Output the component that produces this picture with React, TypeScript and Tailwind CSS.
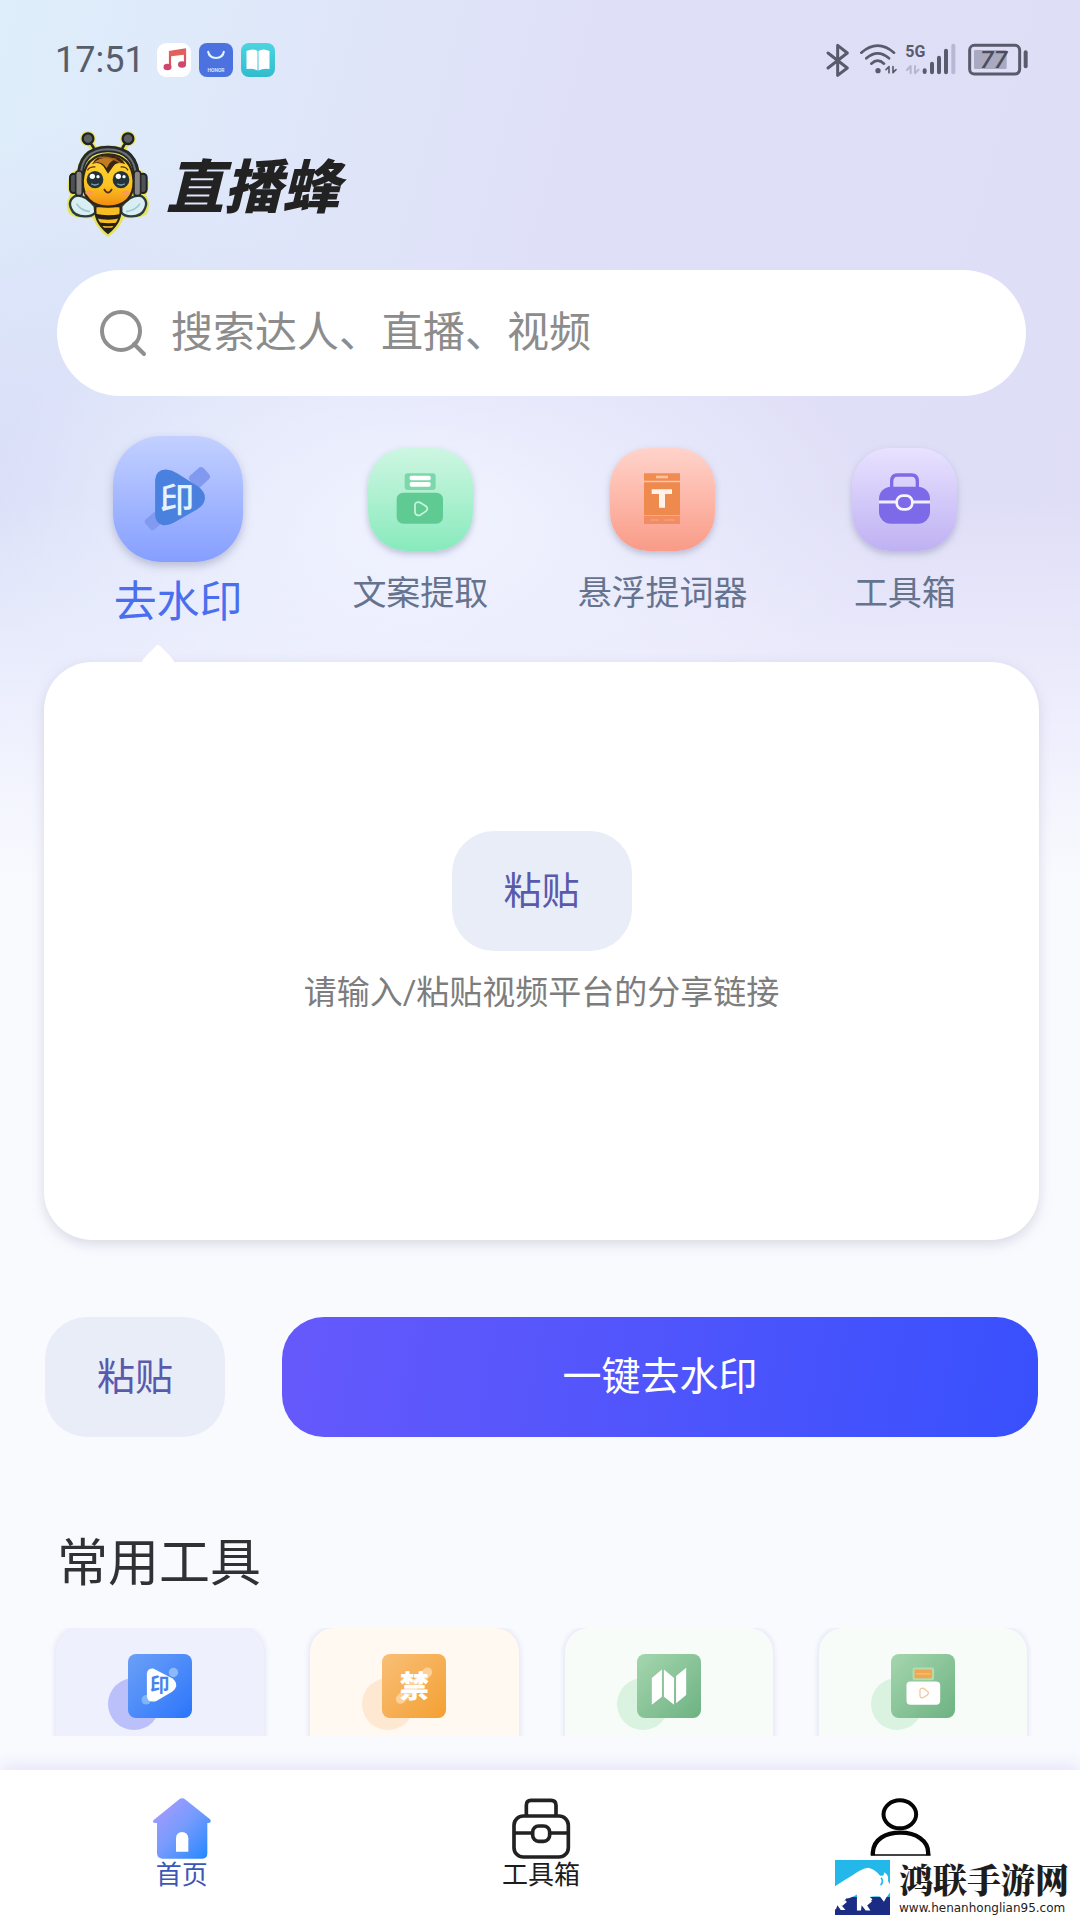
import React from "react";

const FONT = "font-['Roboto','Noto_Sans_CJK_SC',sans-serif]";

function BeeLogo() {
  return (
    <svg viewBox="105 325 255 330" className="h-[110px] w-[85px] shrink-0" aria-label="直播蜂" role="img">
      <defs>
        <linearGradient id="bee-face" x1="0" y1="0" x2="0" y2="1">
          <stop offset="0" stopColor="#ffd53a" />
          <stop offset="0.6" stopColor="#fcc220" />
          <stop offset="1" stopColor="#f08a12" />
        </linearGradient>
        <clipPath id="bee-tail">
          <path d="M197 560Q190 604 234 640Q278 604 271 560Z" />
        </clipPath>
      </defs>
      <g fill="#e6e35c" stroke="#e6e35c" strokeWidth="14" strokeLinejoin="round">
        <circle cx="174" cy="357" r="16" />
        <circle cx="294" cy="357" r="16" />
        <path d="M180 370L198 398M289 370L273 398" fill="none" strokeWidth="20" />
        <path d="M120 490Q125 460 146 456Q160 385 234 382Q308 385 322 456Q344 460 349 490Q349 515 340 525Q356 550 346 578Q325 592 276 588Q266 622 234 644Q204 622 194 588Q140 592 122 576Q112 550 128 525Q118 510 120 490Z" />
      </g>
      <path d="M178 368Q192 378 196 402M290 368Q276 378 274 402" fill="none" stroke="#26292b" strokeWidth="8" />
      <circle cx="174" cy="357" r="16" fill="#5b6063" stroke="#202224" strokeWidth="7" />
      <circle cx="294" cy="357" r="16" fill="#5b6063" stroke="#202224" strokeWidth="7" />
      <path d="M194 560Q160 520 134 530Q112 545 124 568Q132 590 166 590Q188 590 196 578ZM274 560Q308 520 336 530Q356 545 344 568Q336 590 304 590Q282 590 274 578Z" fill="#d9eef2" stroke="#2c3d3e" strokeWidth="7" />
      <path d="M140 552Q150 572 180 576M330 552Q318 572 288 576" fill="none" stroke="#9fc8d2" strokeWidth="5" />
      <g clipPath="url(#bee-tail)">
        <rect x="185" y="555" width="100" height="90" fill="#f6bd24" />
        <path d="M185 580Q234 594 285 580V592Q234 608 185 592ZM185 604Q234 618 285 604V612Q234 628 185 612ZM200 624H270V645H200Z" fill="#241f17" />
      </g>
      <path d="M197 560Q190 604 234 640Q278 604 271 560Z" fill="none" stroke="#2a2318" strokeWidth="6" />
      <path d="M150 480Q148 388 234 388Q320 388 320 480" fill="none" stroke="#25292c" strokeWidth="20" />
      <path d="M152 470Q154 391 234 389Q314 391 318 470" fill="none" stroke="#6b7073" strokeWidth="6" />
      <path d="M234 404Q306 406 311 484Q312 558 234 561Q158 558 158 484Q164 406 234 404Z" fill="url(#bee-face)" stroke="#2e2619" strokeWidth="7" />
      <path d="M186 434Q196 408 234 406Q276 408 286 434Q262 424 250 440L234 462L220 440Q206 424 186 434Z" fill="#3a2412" />
      <path d="M190 430Q214 406 262 418Q240 420 230 446Q216 422 190 430Z" fill="#c17c22" />
      <path d="M206 414Q240 408 272 430" fill="none" stroke="#a0641e" strokeWidth="4" />
      <path d="M172 452Q180 440 196 442M294 452Q288 440 272 442" fill="none" stroke="#5b3a16" strokeWidth="4" />
      <ellipse cx="195" cy="480" rx="25" ry="26" fill="#22333a" />
      <ellipse cx="273" cy="480" rx="25" ry="26" fill="#22333a" />
      <g fill="#fff">
        <circle cx="187" cy="470" r="8" />
        <circle cx="204" cy="471" r="5" />
        <circle cx="265" cy="470" r="8" />
        <circle cx="282" cy="471" r="5" />
      </g>
      <path d="M184 492Q195 500 206 492M262 492Q273 500 284 492" fill="none" stroke="#88a8b2" strokeWidth="4" />
      <path d="M222 508Q234 530 246 508" fill="none" stroke="#50301a" strokeWidth="5" />
      <ellipse cx="178" cy="519" rx="12" ry="6" fill="#fa9a5b" />
      <ellipse cx="288" cy="519" rx="12" ry="6" fill="#fa9a5b" />
      <rect x="120" y="462" width="22" height="58" rx="11" fill="#4d5255" stroke="#1f2224" strokeWidth="6" />
      <rect x="328" y="462" width="22" height="58" rx="11" fill="#4d5255" stroke="#1f2224" strokeWidth="6" />
      <rect x="137" y="454" width="20" height="74" rx="9" fill="#8b8784" stroke="#25282a" strokeWidth="5" />
      <rect x="312" y="454" width="20" height="74" rx="9" fill="#8b8784" stroke="#25282a" strokeWidth="5" />
    </svg>
  );
}

function StatusBar() {
  return (
    <div className="flex items-center justify-between pt-10 pr-[50px] pl-[55px]">
      <div className="flex items-center gap-2">
        <time className="text-[36px] leading-9 text-[#575d6b]">17:51</time>
        <svg viewBox="0 0 34 34" className="ml-1 size-[34px]">
          <rect width="34" height="34" rx="9" fill="#fff" />
          <path d="M13 24V9L28 6.500V21" fill="none" stroke="#dc5560" strokeWidth="2.200" />
          <path d="M12 8.500L29 6V11.500L12 13.500Z" fill="#e2605c" />
          <ellipse cx="10.500" cy="24" rx="4" ry="3.300" fill="#cf466f" />
          <ellipse cx="25" cy="21.500" rx="4" ry="3.300" fill="#cf466f" />
        </svg>
        <svg viewBox="0 0 34 34" className="size-[34px]">
          <rect width="34" height="34" rx="8" fill="#4b72df" />
          <path d="M9 8Q10 15 17 15Q24 15 25 8" fill="none" stroke="#dff6ff" strokeWidth="2" />
          <text x="17" y="28.500" textAnchor="middle" fontSize="5" fontWeight="700" fill="#d4e4ff">HONOR</text>
        </svg>
        <svg viewBox="0 0 34 34" className="size-[34px]">
          <defs>
            <linearGradient id="reader" x1="0" y1="0" x2="0" y2="1">
              <stop stopColor="#4cd4e2" />
              <stop offset="1" stopColor="#31bccd" />
            </linearGradient>
          </defs>
          <rect width="34" height="34" rx="8" fill="url(#reader)" />
          <path d="M5.500 8Q12 5 16.500 8V27.500Q12 25 5.500 26ZM28.500 8Q22 5 17.500 8V27.500Q22 25 28.500 26Z" fill="#fff" />
        </svg>
      </div>
      <svg viewBox="75 60 615 120" className="h-10 w-[205px]" fill="none" stroke="#595b6c" strokeLinecap="round" strokeLinejoin="round">
        <path d="M84 99L142 144L113 166V76L142 99L84 144" strokeWidth="9" />
        <path d="M184 98Q233 56 282 98M199 115Q233 85 267 115M214 131Q233 113 252 131" strokeWidth="8" />
        <circle cx="234" cy="152" r="8" fill="#595b6c" stroke="none" />
        <path d="M258 149L267 140V158M279 140V158L288 149" strokeWidth="5" />
        <text x="316" y="110" fontSize="48" fontWeight="700" fill="#595b6c" stroke="none">5G</text>
        <path d="M321 150L332 138V160M345 138V160L356 149" stroke="#b7b6cf" strokeWidth="6" />
        <path d="M374 151V156M396 131V157M417 113V157M438 92V157" strokeWidth="12" />
        <path d="M460 77V157" stroke="#b9b8d4" strokeWidth="12" />
        <rect x="509" y="76" width="150" height="86" rx="14" strokeWidth="9" />
        <rect x="522" y="90" width="98" height="57" rx="4" fill="#a9a9bf" stroke="none" />
        <text x="581" y="145" textAnchor="middle" fontSize="74" fontWeight="500" fontStyle="italic" fill="#4b4d5d" stroke="none">77</text>
        <path d="M677 97V139" strokeWidth="12" />
      </svg>
    </div>
  );
}

function WatermarkIcon() {
  return (
    <svg viewBox="70 46 390 380" className="size-full">
      <rect x="302" y="148" width="56" height="46" rx="12" transform="rotate(-42 330 171)" fill="#8199ee" />
      <rect x="168" y="282" width="50" height="40" rx="10" transform="rotate(-42 193 302)" fill="#8199ee" />
      <path d="M196 178Q198 148 228 147Q246 148 262 158L328 200Q348 216 346 236Q344 254 322 268L252 308Q236 317 220 315Q198 310 196 286Z" fill="#4a80de" />
      <text x="262" y="276" textAnchor="middle" fontSize="104" fontWeight="500" fill="#e6f3ff">印</text>
    </svg>
  );
}

function CopyIcon() {
  return (
    <svg viewBox="835 86 315 309" className="size-full">
      <rect x="945" y="162" width="93" height="50" rx="9" fill="#7cd8aa" />
      <rect x="960" y="169" width="63" height="14" rx="5" fill="#fff" />
      <rect x="960" y="188" width="63" height="14" rx="5" fill="#fff" />
      <rect x="921" y="220" width="139" height="93" rx="20" fill="#5fcb93" />
      <path d="M976 256Q978 246 990 249L1008 260Q1018 268 1008 276L990 288Q978 290 976 280Z" fill="none" stroke="#c8f6df" strokeWidth="5" />
    </svg>
  );
}

function PrompterIcon() {
  return (
    <svg viewBox="152 86 315 309" className="size-full">
      <path d="M254 162H362V184H254Z" fill="#f08b52" />
      <path d="M254 189H362V287H254Z" fill="#ef8a4e" />
      <path d="M254 289H362V314H254Z" fill="#f18c63" />
      <path d="M290 173H326" stroke="#fbc29c" strokeWidth="8" />
      <path d="M274 302H298M316 302H346" stroke="#f4a077" strokeWidth="5" />
      <path d="M277 210H338V224H317V265H299V224H277Z" fill="#fff2e8" />
    </svg>
  );
}

function ToolboxTileIcon() {
  return (
    <svg viewBox="876 86 315 309" className="size-full">
      <path d="M995 206V186Q995 167 1012 167H1055Q1072 167 1072 186V206" fill="none" stroke="#7c6ae8" strokeWidth="10" />
      <rect x="957" y="202" width="153" height="111" rx="36" fill="#7c6ae8" />
      <path d="M957 248H1110" stroke="#f1edff" strokeWidth="9" />
      <rect x="1010" y="229" width="47" height="41" rx="19" fill="#7c6ae8" stroke="#f7f4ff" strokeWidth="8" />
    </svg>
  );
}

const features = [
  { label: "文案提取", icon: <CopyIcon />, tile: "from-[#cdf6e2] to-[#87eabd]" },
  { label: "悬浮提词器", icon: <PrompterIcon />, tile: "from-[#ffd3ca] to-[#f99b88]" },
  { label: "工具箱", icon: <ToolboxTileIcon />, tile: "from-[#e9e2ff] to-[#bfb1f2]" },
];

function ToolGlyph({ kind }: { kind: string }) {
  if (kind === "mark")
    return (
      <svg viewBox="295 158 190 190" className="size-full">
        <circle cx="430" cy="213" r="14" fill="#8fb8fb" />
        <circle cx="349" cy="294" r="14" fill="#7fb5fb" />
        <path d="M351 216Q353 200 370 201L426 230Q440 240 438 254Q436 264 426 270L378 298Q354 304 351 284Z" fill="#fff" />
        <text x="389" y="272" textAnchor="middle" fontSize="58" fontWeight="700" fill="#4682f0">印</text>
      </svg>
    );
  if (kind === "ban")
    return (
      <svg viewBox="1057 158 190 190" className="size-full">
        <path d="M1112 292L1192 212" stroke="#fbd199" strokeWidth="28" strokeLinecap="round" />
        <text x="1153" y="286" textAnchor="middle" fontSize="88" fontWeight="900" fill="#fff">禁</text>
      </svg>
    );
  if (kind === "map")
    return (
      <svg viewBox="292 158 190 190" className="size-full">
        <path d="M336 229L366 204V285L336 309ZM372 204L402 229V309L372 285ZM408 223L438 199V280L408 304Z" fill="#fff" />
      </svg>
    );
  return (
    <svg viewBox="1055 158 190 190" className="size-full">
      <rect x="1122" y="201" width="58" height="32" rx="3" fill="#f0a750" stroke="#b4dcae" strokeWidth="6" />
      <path d="M1130 217H1172" stroke="#f9c176" strokeWidth="4" />
      <rect x="1101" y="240" width="100" height="69" rx="12" fill="#fff" />
      <path d="M1141 266Q1142 258 1152 260L1162 268Q1170 274 1162 280L1152 287Q1142 290 1141 282Z" fill="none" stroke="#f2c8a0" strokeWidth="4" />
    </svg>
  );
}

const tools = [
  { kind: "mark", name: "去水印", card: "bg-[#eef0fd]", dot: "bg-[#bcc0fa]", tile: "from-[#6ca0f6] to-[#2a74fb]" },
  { kind: "ban", name: "违禁词", card: "bg-[#fff9f2]", dot: "bg-[#fee8d2]", tile: "from-[#f8bf75] to-[#f4a02c]" },
  { kind: "map", name: "地图", card: "bg-[#f8fcf9]", dot: "bg-[#d9f3e0]", tile: "from-[#a5d6ae] to-[#6db283]" },
  { kind: "copy", name: "文案提取", card: "bg-[#f8fcf9]", dot: "bg-[#d9f3e0]", tile: "from-[#a5d6ae] to-[#6db283]" },
];

function HomeIcon() {
  return (
    <svg viewBox="145 112 180 183" className="h-[61px] w-[60px]">
      <defs>
        <linearGradient id="home-fill" x1="0" y1="0" x2="1" y2="1">
          <stop offset="0.15" stopColor="#9f9bfd" />
          <stop offset="0.5" stopColor="#769bfd" />
          <stop offset="1" stopColor="#1f86ff" />
        </linearGradient>
      </defs>
      <path fillRule="evenodd" d="M225 117Q235 109 246 117L319 176Q326 186 311 187V278Q311 294 296 294H177Q161 294 160 278V187Q143 187 150 178ZM217 273H254V232Q252 214 235 214Q218 215 217 232Z" fill="url(#home-fill)" />
    </svg>
  );
}

function ToolboxNavIcon() {
  return (
    <svg viewBox="1192 112 180 183" className="h-[61px] w-[60px]" fill="none" stroke="#222" strokeWidth="11">
      <path d="M1238 164V134Q1238 119 1252 119H1312Q1327 119 1327 134V164" />
      <rect x="1201" y="166" width="163" height="123" rx="28" />
      <path d="M1201 217H1257M1309 217H1364" />
      <rect x="1257" y="196" width="51" height="46" rx="18" />
    </svg>
  );
}

function ProfileIcon() {
  return (
    <svg viewBox="218 112 182 183" className="h-[61px] w-[61px]" fill="none" stroke="#050505">
      <ellipse cx="307" cy="161" rx="49" ry="42" strokeWidth="12" />
      <path d="M226 284V276C228 236 264 216 309 216C356 216 392 240 392 276V284" strokeWidth="13" />
      <path d="M220 283H399" strokeWidth="4" />
    </svg>
  );
}

function SiteBadge() {
  return (
    <aside className="absolute right-0 bottom-0 flex items-end gap-[9px] bg-white pr-[11px] pb-[5px] pl-1">
      <svg viewBox="101 300 163 163" className="size-[55px]">
        <path d="M101 300H264V463H101Z" fill="#24b8ea" />
        <path d="M101 410H264V463H101Z" fill="#1b2c85" />
        <path d="M101 378Q128 360 152 346Q178 326 200 323Q222 330 234 346Q248 350 246 336Q262 344 258 362L264 372V396L254 410L246 424L234 408Q216 406 204 410L212 416L196 434L206 450H192L180 434L178 450H166V402Q146 414 134 414L120 434L132 448H118L108 434L104 446H101Z" fill="#fff" />
        <path d="M120 434L134 422M192 434L208 420" stroke="#fff" strokeWidth="7" />
        <path d="M238 352Q246 366 236 374" fill="none" stroke="#24b8ea" strokeWidth="5" />
      </svg>
      <div className="flex flex-col">
        <span className="font-['Noto_Serif_CJK_SC','Noto_Sans_CJK_SC',serif] text-[34px] leading-[44px] font-black text-[#1d1d1d]">鸿联手游网</span>
        <span className="font-['DejaVu_Sans',sans-serif] text-[12px] leading-[14px] text-[#222]">www.henanhonglian95.com</span>
      </div>
    </aside>
  );
}

export default function App() {
  return (
    <div
      className={`${FONT} relative flex h-screen flex-col overflow-hidden bg-[#f9fafe] bg-[radial-gradient(ellipse_460px_240px_at_430px_520px,#f1f4ff_0%,#f1f4ff00_100%),linear-gradient(180deg,#f9fafe00_0px,#f9fafe00_500px,#f4f4ffcc_740px,#f9fafe_880px),radial-gradient(ellipse_420px_360px_at_0px_480px,#dadef8_0%,#dadef800_100%),linear-gradient(105deg,#deeefb_0px,#dfe6f9_330px,#dfdff8_640px,#dfddf6_100%)]`}
    >
      <StatusBar />

      <main className="flex min-h-0 flex-1 flex-col">
        <header className="mt-12 flex items-center gap-4 pl-[65px]">
          <BeeLogo />
          <h1 className="font-['Noto_Sans_CJK_SC',sans-serif] text-[58px] leading-[64px] font-black text-[#222] italic">直播蜂</h1>
        </header>

        <label className="mr-[54px] ml-[57px] mt-8 flex h-[126px] shrink-0 items-center gap-6 rounded-full bg-white px-[42px]">
          <svg viewBox="0 0 48 48" className="size-12 shrink-0" fill="none" stroke="#8f8f8f" strokeWidth="4" strokeLinecap="round">
            <circle cx="22" cy="22" r="19" />
            <path d="M35 35L45 45" />
          </svg>
          <input type="search" aria-label="搜索" placeholder="搜索达人、直播、视频" className="min-w-0 flex-1 bg-transparent text-[42px] leading-[60px] outline-none placeholder:text-[#8c8c8c]" />
        </label>

        <nav className="mr-[54px] ml-[57px] mt-10 grid grid-cols-4" aria-label="功能">
          <button className="flex flex-col items-center gap-[10px]">
            <span className="h-[126px] w-[130px] rounded-[48px] bg-linear-to-b from-[#c3d0ff] to-[#869fff] shadow-[0_4px_8px_#8c8fb080]">
              <WatermarkIcon />
            </span>
            <span className="text-[43px] leading-[60px] whitespace-nowrap text-[#4a6fee]">去水印</span>
          </button>
          {features.map((f) => (
            <button key={f.label} className="flex flex-col items-center gap-[18px] pt-3">
              <span className={`h-[103px] w-[105px] rounded-[38px] bg-linear-to-b shadow-[0_3px_6px_#8c8fb080] ${f.tile}`}>{f.icon}</span>
              <span className="text-[34px] leading-[48px] whitespace-nowrap text-[#66738e]">{f.label}</span>
            </button>
          ))}
        </nav>

        <section className="relative mr-[41px] ml-[44px] mt-[30px] flex h-[578px] shrink-0 flex-col items-center rounded-[48px] bg-white pt-[169px] shadow-[0_4px_12px_#b8bace80]">
          <svg viewBox="0 0 34 20" className="absolute -top-[18px] left-[97px] h-5 w-[34px]">
            <path d="M0 20Q1 16 5 12L15 2Q17 0 19 2L29 12Q33 16 34 20Z" fill="#fff" />
          </svg>
          <button className="h-[120px] w-[180px] rounded-[42px] bg-[#e9edf8] text-[38px] text-[#5a5aac]">粘贴</button>
          <p className="mt-[18px] text-[33px] leading-[48px] text-[#7d7d7d]">请输入/粘贴视频平台的分享链接</p>
        </section>

        <div className="mt-[77px] flex shrink-0 gap-[57px] pr-[42px] pl-[45px]">
          <button className="h-[120px] w-[180px] shrink-0 rounded-[42px] bg-[#e9edf8] text-[38px] text-[#5a5aac]">粘贴</button>
          <button className="h-[120px] flex-1 rounded-[42px] bg-linear-[100deg,#6659fb,#4b54fc_60%,#3850fc] text-[39px] text-white">一键去水印</button>
        </div>

        <h2 className="mt-[91px] px-[57px] text-[51px] leading-[72px] text-[#303133]">常用工具</h2>
        <div className="mt-[28px] flex min-h-0 flex-1 overflow-hidden pr-[53px] pl-[56px]">
          <ul className="grid flex-1 grid-cols-4 gap-[46px]">
            {tools.map((t) => (
              <li key={t.name}>
                <button aria-label={t.name} className={`relative block h-[208px] w-full rounded-[24px] shadow-[0_0_6px_#d8dcf0] ${t.card}`}>
                  <span className={`absolute top-[50px] left-[52px] size-[52px] rounded-full ${t.dot}`} />
                  <span className={`absolute top-[26px] left-[72px] size-[64px] overflow-hidden rounded-lg bg-linear-to-br ${t.tile}`}>
                    <ToolGlyph kind={t.kind} />
                  </span>
                </button>
              </li>
            ))}
          </ul>
        </div>
      </main>

      <nav className="mt-[34px] grid h-[150px] shrink-0 grid-cols-3 bg-white pt-7 pl-[2px] shadow-[0_-4px_16px_#e4e4fa]" aria-label="主导航">
        <a href="#home" className="flex flex-col items-center text-[26px] leading-8 text-[#3c56b8]">
          <HomeIcon />
          首页
        </a>
        <a href="#tools" className="flex flex-col items-center text-[26px] leading-8 text-[#1c1c1c]">
          <ToolboxNavIcon />
          工具箱
        </a>
        <a href="#me" aria-label="我的" className="flex flex-col items-center">
          <ProfileIcon />
        </a>
      </nav>
      <SiteBadge />
    </div>
  );
}
